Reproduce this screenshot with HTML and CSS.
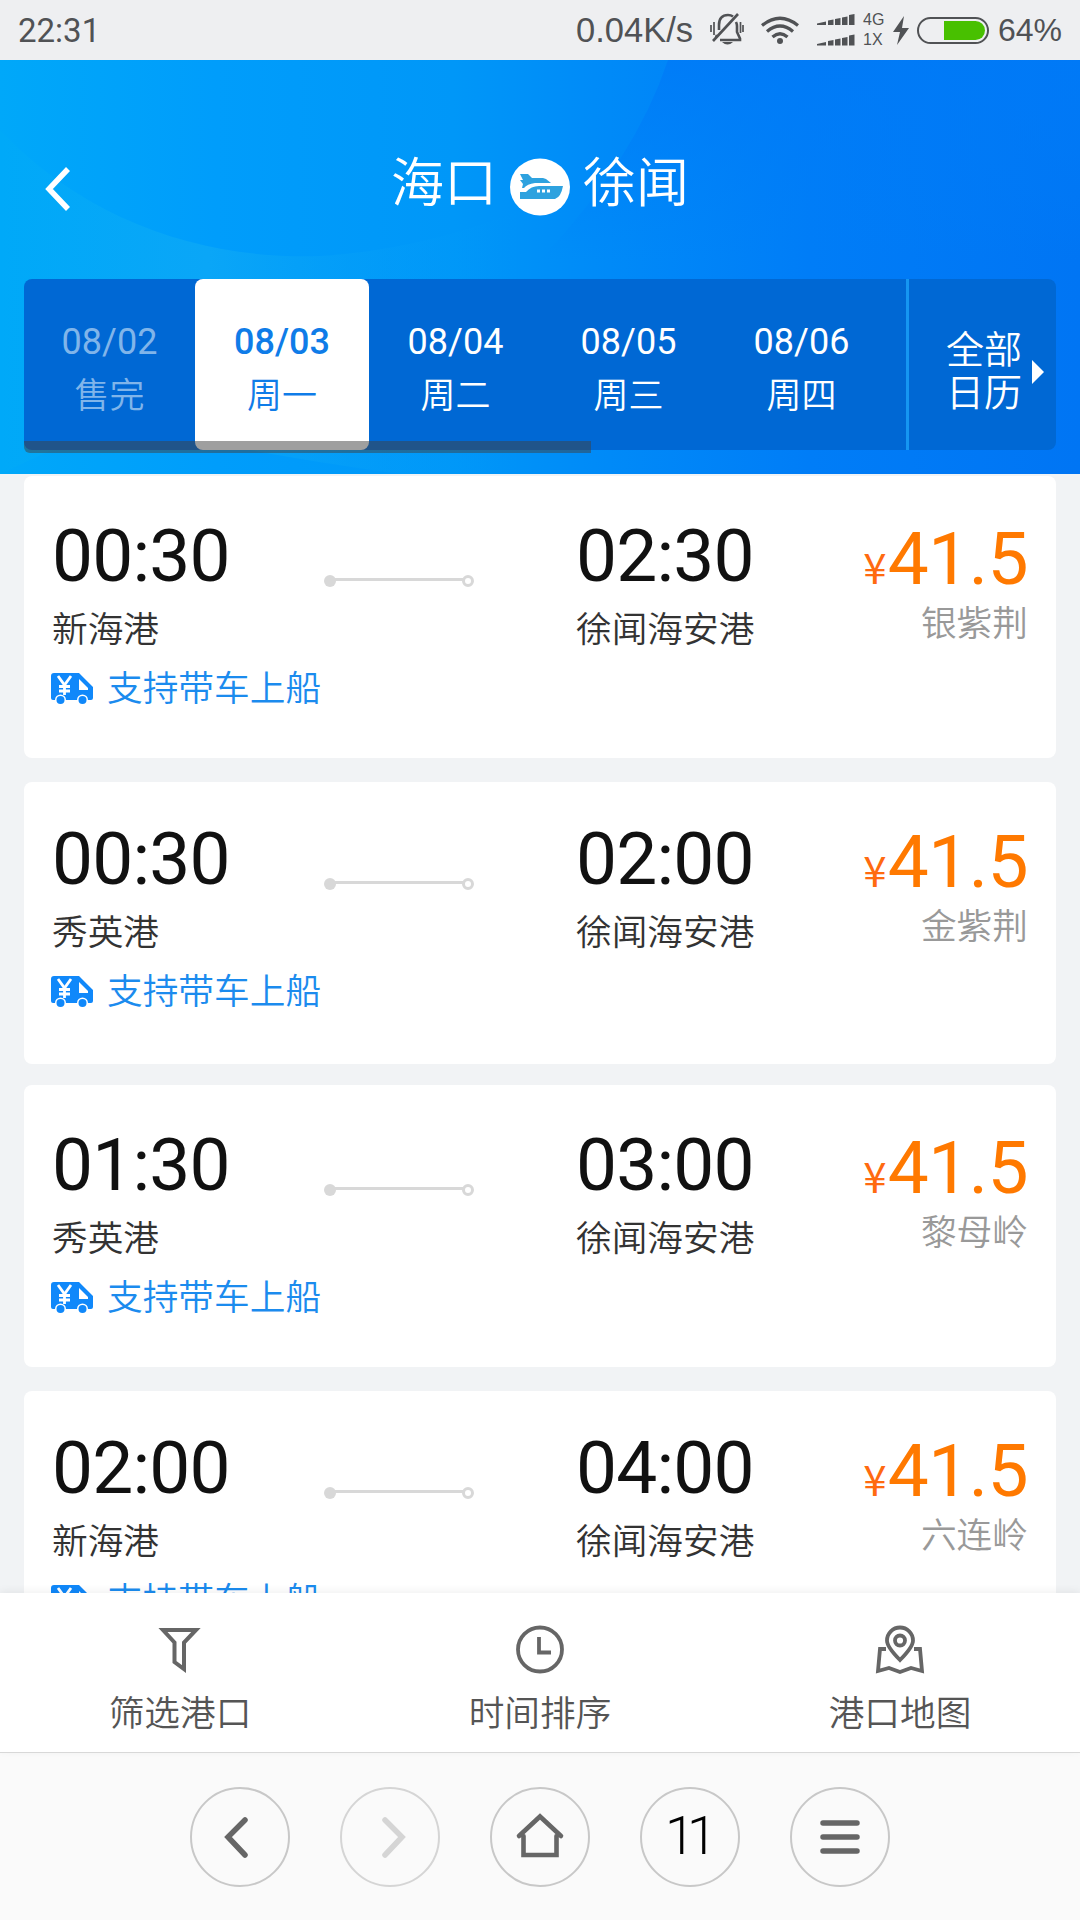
FILE: index.html
```html
<!DOCTYPE html>
<html lang="zh-CN">
<head>
<meta charset="utf-8">
<title>海口 - 徐闻</title>
<link rel="stylesheet" href="styles.css">
</head>
<body>
<svg width="0" height="0" class="defs" aria-hidden="true">
  <symbol id="van" viewBox="0 0 42 32">
    <path fill="#1088fa" d="M3 0H28L42 14V25Q42 27 40 27H37A5.5 5.5 0 0 0 26 27H15A5.500 5.500 0 0 0 4 27H2Q0 27 0 25V3Q0 0 3 0Z"/>
    <circle cx="9.500" cy="27" r="4" fill="#1088fa"/><circle cx="31.500" cy="27" r="4" fill="#1088fa"/>
    <path fill="#fff" d="M28 6 37 15V17H28Z"/>
    <path fill="none" stroke="#fff" stroke-width="2.800" d="M7 3 13.500 12 20 3M13.500 11V22M8 13.500H19M8 18H19"/>
  </symbol>
</svg>
<header class="status">
  <span class="clock">22:31</span>
  <span class="speed">0.04K/s</span>
  <svg class="bell" viewBox="0 0 34 32" width="34" height="32" fill="none" stroke="#505255" stroke-width="2.600">
    <path d="M9 17V12Q9 2 18 2Q21 2 23 3.500M26 9Q27 11 27 13V19L30 25.500V27H10M7 22 6 24M3 28 28 1"/><path stroke-width="1.700" d="M1 12V19M4 9V22M33 12V19M30.500 9V20"/><path fill="#505255" stroke="none" d="M12 29H23Q17.500 34 12 29Z"/>
  </svg>
  <svg class="wifi" viewBox="0 0 38 28" width="38" height="28" fill="none" stroke="#505255" stroke-width="3.300">
    <path d="M1 9.500Q19-5 37 9.500M6 15.500Q19 4.500 32 15.500M11.500 21Q19 14.500 26.500 21"/><circle cx="19" cy="25" r="3" fill="#505255" stroke="none"/>
  </svg>
  <svg class="signal" viewBox="0 0 38 33" width="38" height="33" fill="#505255">
    <path id="bars" d="M0 11V9.500L9 7.500V11ZM11 11V6.500L16.500 5.500V11ZM18 11V5L23.500 4V11ZM25 11V3.500L30.500 2.500V11ZM32 11V1L37.500 0V11Z"/><use href="#bars" y="20.500"/>
  </svg>
  <span class="net"><span>4G</span><span>1X</span></span>
  <svg class="bolt" viewBox="0 0 16 29" width="16" height="29" fill="#505255"><path d="M11 0 0 16H7L4 29 16 12H9Z"/></svg>
  <span class="battery"><span class="charge"></span></span>
  <span class="percent">64%</span>
</header>

<section class="hero">
  <svg class="waves" viewBox="0 0 1080 414" preserveAspectRatio="none" aria-hidden="true">
    <defs>
      <linearGradient id="base"><stop offset="0" stop-color="#00a8f9"/><stop offset=".2" stop-color="#009dfb"/><stop offset=".42" stop-color="#0097f8"/><stop offset=".55" stop-color="#008bf8"/><stop offset=".75" stop-color="#007df7"/><stop offset="1" stop-color="#0075f4"/></linearGradient>
      <linearGradient id="deep" x1="0" y1="0" x2="0" y2="1"><stop offset="0" stop-color="#007af7"/><stop offset="1" stop-color="#007ef8" stop-opacity="0"/></linearGradient>
      <linearGradient id="glow"><stop offset="0" stop-color="#00a9f8"/><stop offset=".4" stop-color="#0aa6f7"/><stop offset="1" stop-color="#0098f8" stop-opacity="0"/></linearGradient>
    </defs>
    <path fill="url(#base)" d="M0 0H1080V414H0Z"/>
    <path fill="url(#glow)" d="M0 70C90 165 210 200 320 196Q420 190 520 150V414H400Q300 400 240 388L180 330 0 414Z"/>
    <path fill="url(#deep)" d="M668 0H1080V200H540Q635 100 668 0Z" opacity=".8"/>
  </svg>
  <div class="titlebar">
    <svg class="back" viewBox="0 0 26 44" width="26" height="44" fill="none" stroke="#fff" stroke-width="5.500"><path d="M24 2 5 22 24 42"/></svg>
    <h1 class="route"><span>海口</span>
      <svg viewBox="0 0 60 58" width="60" height="58"><ellipse cx="30" cy="29" rx="30" ry="28.500" fill="#fff"/><path fill="#2ea2df" d="M10 16H18L22 20H33L36 21 41 25H25Q17 26 14 30H12L13 26 10 22H13ZM10 34H16Q21 28 29 28H53Q51 39 45 41H10Z"/><path fill="#fff" d="M27 31.500h3v3h-3zM32 31.500h3v3h-3zM37 31.500h3v3h-3z"/></svg>
    <span>徐闻</span></h1>
  </div>
  <nav class="dates">
    <div class="strip">
      <div class="day sold"><b>08/02</b><span>售完</span></div>
      <div class="day active"><b>08/03</b><span>周一</span></div>
      <div class="day"><b>08/04</b><span>周二</span></div>
      <div class="day"><b>08/05</b><span>周三</span></div>
      <div class="day"><b>08/06</b><span>周四</span></div>
      <i class="scrollbar"></i>
    </div>
    <div class="calendar"><span>全部<br>日历</span><svg viewBox="0 0 12 24" width="12" height="24" fill="#fff"><path d="M0 0 12 12 0 24Z"/></svg></div>
  </nav>
</section>

<main class="list">
  <article class="trip">
    <div class="from"><time>00:30</time><p>新海港</p></div>
    <div class="line"></div>
    <div class="to"><time>02:30</time><p>徐闻海安港</p></div>
    <div class="fare"><p class="price"><small>¥</small>41.5</p><p class="ship">银紫荆</p></div>
    <div class="tag"><svg width="42" height="32"><use href="#van"/></svg>支持带车上船</div>
  </article>
  <article class="trip">
    <div class="from"><time>00:30</time><p>秀英港</p></div>
    <div class="line"></div>
    <div class="to"><time>02:00</time><p>徐闻海安港</p></div>
    <div class="fare"><p class="price"><small>¥</small>41.5</p><p class="ship">金紫荆</p></div>
    <div class="tag"><svg width="42" height="32"><use href="#van"/></svg>支持带车上船</div>
  </article>
  <article class="trip">
    <div class="from"><time>01:30</time><p>秀英港</p></div>
    <div class="line"></div>
    <div class="to"><time>03:00</time><p>徐闻海安港</p></div>
    <div class="fare"><p class="price"><small>¥</small>41.5</p><p class="ship">黎母岭</p></div>
    <div class="tag"><svg width="42" height="32"><use href="#van"/></svg>支持带车上船</div>
  </article>
  <article class="trip">
    <div class="from"><time>02:00</time><p>新海港</p></div>
    <div class="line"></div>
    <div class="to"><time>04:00</time><p>徐闻海安港</p></div>
    <div class="fare"><p class="price"><small>¥</small>41.5</p><p class="ship">六连岭</p></div>
    <div class="tag"><svg width="42" height="32"><use href="#van"/></svg>支持带车上船</div>
  </article>
</main>

<nav class="tools">
  <a><svg viewBox="0 0 52 52" width="52" height="52" fill="none" stroke="#666" stroke-width="4"><path d="M9 6H42L30 18.500V45L20.500 38V18.500Z"/></svg><span>筛选港口</span></a>
  <a><svg viewBox="0 0 52 52" width="52" height="52" fill="none" stroke="#666" stroke-width="3.800"><circle cx="26" cy="25.500" r="22"/><path d="M25 13V28.500H37"/></svg><span>时间排序</span></a>
  <a><svg viewBox="0 0 52 52" width="52" height="52" fill="none" stroke="#666" stroke-width="3.800"><path d="M26 36Q13 23 13 16.500A13 13 0 0 1 39 16.500Q39 23 26 36Z"/><circle cx="26" cy="16.500" r="5"/><path d="M12 25H6L4 47 15 44 26 48 37 44 48 47 46 25H40"/></svg><span>港口地图</span></a>
</nav>

<footer class="browser">
  <span class="btn"><svg viewBox="0 0 100 100"><path d="M55 33 38 50 55 68"/></svg></span>
  <span class="btn off"><svg viewBox="0 0 100 100"><path d="M45 33 62 50 45 68"/></svg></span>
  <span class="btn"><svg class="home" viewBox="0 0 100 100"><path d="M29 49 50 29.500 71 49M33.500 49V68H66.500V49"/></svg></span>
  <span class="btn tabs">11</span>
  <span class="btn"><svg viewBox="0 0 100 100"><path d="M33 36H67M33 50H67M33 64H67"/></svg></span>
</footer>
</body>
</html>
```

FILE: styles.css
```css
*, *::before, *::after { box-sizing: border-box; margin: 0; padding: 0; }
body {
  width: 1080px; height: 1920px; overflow: hidden;
  display: flex; flex-direction: column;
  background: #f1f3f5;
  font-family: Roboto, "Noto Sans CJK SC", sans-serif;
  font-weight: 350;
}
svg { display: block; flex: none; }
.defs { position: absolute; }

.status {
  flex: none; height: 60px; padding: 0 18px;
  display: flex; align-items: center;
  background: #eeeff1; color: #505255;
  font-family: "Liberation Sans", Arial, sans-serif; font-size: 34.500px; font-weight: 400;
}
.clock { font-family: Roboto, sans-serif; font-size: 33px; }
.speed { margin-left: auto; }
.bell { margin-left: 17px; margin-top: -2px; }
.wifi { margin-left: 17px; }
.signal { margin-left: 18px; }
.net { margin-left: 8px; display: flex; flex-direction: column; font-size: 16px; line-height: 20px; width: 22px; }
.bolt { margin-left: 8px; }
.battery { margin-left: 8px; width: 72px; height: 27px; border: 2px solid #505255; border-radius: 14px; padding: 2px; display: flex; justify-content: flex-end; }
.charge { width: 41px; background: #48c000; border-radius: 0 10px 10px 0; }
.percent { margin-left: 9px; width: 64px; white-space: nowrap; font-size: 32px; }

.hero { flex: none; position: relative; height: 414px; }
.waves { position: absolute; inset: 0; width: 100%; height: 100%; }
.titlebar { position: relative; height: 219px; padding: 69px 44px 0; display: grid; grid-template-columns: 26px 1fr 26px; align-items: start; }
.back { margin-top: 38px; }
.route { display: flex; justify-content: center; align-items: center; gap: 13px; height: 116px; color: #fff; font-size: 53px; font-weight: 350; }
.route span { line-height: 60px; margin-top: -6px; }
.dates { position: relative; margin: 0 24px; height: 171px; display: flex; color: #fff; }
.strip { position: relative; width: 882px; display: flex; background: #0068d4; border-radius: 8px 0 0 8px; }
.day { width: 173px; padding-top: 41px; display: flex; flex-direction: column; align-items: center; }
.day:first-child { width: 171px; }
.day b { font-size: 36px; line-height: 44px; font-weight: 400; }
.day span { margin-top: 8px; line-height: 50px; font-size: 35px; }
.day.active { width: 174px; background: #fff; color: #0f7ce8; border-radius: 8px; }
.day.active b { font-weight: 500; }
.day.sold { color: #80b5ea; }
.scrollbar { position: absolute; left: 0; top: 162px; width: 567px; height: 12px; background: rgba(64, 64, 64, .5); border-radius: 0 0 0 6px; }
.calendar { flex: 1; display: flex; align-items: center; justify-content: flex-end; gap: 10px; padding: 14px 12px 0 0; background: #0068d4; border-left: 3px solid #1596f2; border-radius: 0 8px 8px 0; font-size: 38px; line-height: 43px; }

.list { flex: 1; min-height: 0; overflow: hidden; padding: 2px 24px 0; display: flex; flex-direction: column; }
.trip {
  flex: none; height: 282px; padding: 38px 28px 0; border-radius: 8px; background: #fff;
  display: grid; grid-template-columns: 272px 252px 200px 1fr; grid-template-rows: 154px 42px;
}
.trip:nth-child(even) { margin: 24px 0 21px; padding-top: 35px; }
time { display: block; font-size: 73px; line-height: 84px; font-weight: 400; color: #111; letter-spacing: -.8px; }
.from p, .to p { font-size: 35.700px; line-height: 52px; color: #333; margin-top: 6px; white-space: nowrap; }
.line { position: relative; width: 150px; height: 12px; margin-top: 61px; background: linear-gradient(#d8d8d8, #d8d8d8) 8px 3px / 134px 3px no-repeat; }
.line::before, .line::after { content: ""; position: absolute; top: 0; width: 12px; height: 12px; border-radius: 50%; background: #d8d8d8; }
.line::after { right: 0; background: #fff; border: 3px solid #d8d8d8; }
.fare { display: flex; flex-direction: column; align-items: flex-end; white-space: nowrap; }
.price { display: flex; align-items: baseline; font-size: 73px; line-height: 84px; height: 84px; font-weight: 400; color: #ff7900; margin-top: 3px; letter-spacing: -.5px; }
.price small { font-family: "Noto Sans CJK SC", sans-serif; font-size: 42px; line-height: 50px; color: #ff6a10; font-weight: 400; letter-spacing: 1px; }
.ship { font-size: 35.700px; line-height: 44px; color: #999; margin-top: 1px; }
.tag { grid-column: 1 / -1; display: flex; align-items: center; gap: 14px; margin-left: -1px; color: #1b8bee; font-size: 35.700px; line-height: 42px; }

.tools { position: relative; flex: none; height: 160px; padding-top: 31px; display: grid; grid-template-columns: repeat(3, 1fr); background: #fff; border-bottom: 1px solid #d8d8d8; box-shadow: 0 -2px 8px rgba(0, 0, 0, .06); color: #555; }
.tools a { display: flex; flex-direction: column; align-items: center; font-size: 35.700px; line-height: 50px; }
.tools span { margin-top: 13px; }
.browser { flex: none; height: 167px; padding: 34px 190px 0; display: flex; justify-content: space-between; background: #fafafa; }
.btn { width: 100px; height: 100px; border: 2px solid #c8c8c8; border-radius: 50%; display: flex; align-items: center; justify-content: center; color: #666; }
.btn svg { margin: -2px; width: 100px; height: 100px; fill: none; stroke: currentColor; stroke-width: 5.500; stroke-linecap: round; }
.btn .home { stroke-width: 4.600; }
.btn.off { border-color: #d5d5d5; color: #d5d5d5; }
.btn.tabs { color: #000; font-family: Roboto, sans-serif; font-size: 54px; font-weight: 300; letter-spacing: -8px; padding: 0 6px 4px 0; }
```
